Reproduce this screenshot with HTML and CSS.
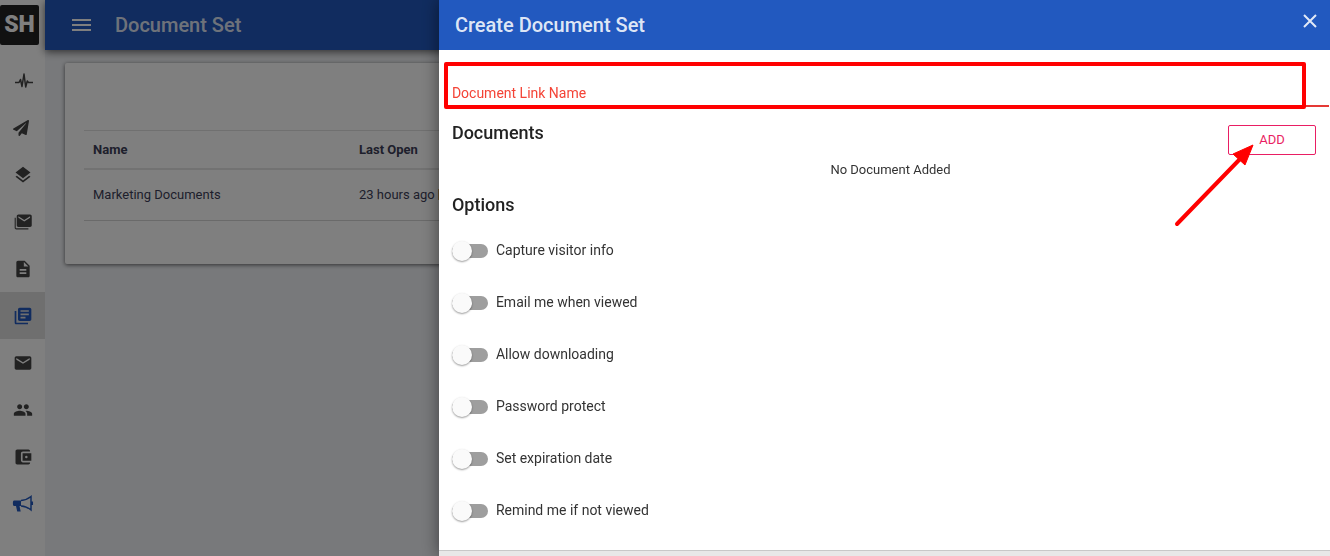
FILE: index.html
```html
<!DOCTYPE html>
<html lang="en">
<head>
  <meta charset="UTF-8" />
  <meta name="viewport" content="width=device-width, initial-scale=1.0" />
  <title>Document Set</title>
  <link rel="stylesheet" href="styles.css">
</head>
<body>
  <div class="app">
    <nav class="sidebar">
      <a href="#" class="logo">SH</a>
      <a href="#" class="nav-item" aria-label="Activity">
        <svg class="line pulse" viewBox="0 0 20 18" width="20" height="18"><path d="M1 10.500h4l1.500-3 1.500 7L10 2l1.700 13 1.600-6 1.200 1.500H19" /></svg>
      </a>
      <a href="#" class="nav-item" aria-label="Campaigns">
        <svg class="send" viewBox="0 0 512 512" width="16" height="16"><path d="M476 3.200L12.500 270.600c-18.100 10.400-15.800 35.600 2.200 43.200L121 358.400l287.300-253.200c5.500-4.900 13.300 2.600 8.600 8.300L176 407v80.500c0 23.600 28.500 32.900 42.500 15.800L282 426l124.600 52.200c14.200 6 30.400-2.900 33-18.200l72-432C515 7.800 493.300-6.800 476 3.200z" /></svg>
      </a>
      <a href="#" class="nav-item" aria-label="Layers">
        <svg viewBox="0 0 24 24" width="20" height="20"><path d="M11.990 18.540l-7.370-5.730L3 14.070l9 7 9-7-1.630-1.270-7.380 5.740zM12 16l7.360-5.730L21 9l-9-7-9 7 1.630 1.270L12 16z" /></svg>
      </a>
      <a href="#" class="nav-item" aria-label="Mailings">
        <svg viewBox="0 0 24 24" width="20" height="20"><path d="M20.500 3H6.500C5.400 3 4.500 3.900 4.500 5v11c0 1.100.9 2 2 2h14c1.100 0 2-.9 2-2V5c0-1.100-.9-2-2-2zm0 4l-7 4.500-7-4.500V5l7 4.500 7-4.500v2zM3.300 7H2v12c0 1.100.9 2 2 2h14.500v-1.500H3.300V7z" /></svg>
      </a>
      <a href="#" class="nav-item" aria-label="Templates">
        <svg viewBox="0 0 24 24" width="20" height="20"><path d="M14 2H6c-1.100 0-1.990.9-1.990 2L4 20c0 1.100.89 2 1.990 2H18c1.100 0 2-.9 2-2V8l-6-6zm2 16H8v-2h8v2zm0-4H8v-2h8v2zm-3-5V3.500L18.500 9H13z" /></svg>
      </a>
      <a href="#" class="nav-item active" aria-label="Document sets">
        <svg viewBox="0 0 24 24" width="20" height="20"><path d="M4 6H2v14c0 1.100.9 2 2 2h14v-2H4V6zm16-4H8c-1.100 0-2 .9-2 2v12c0 1.100.9 2 2 2h12c1.100 0 2-.9 2-2V4c0-1.100-.9-2-2-2zm-1 9H9V9h10v2zm-4 4H9v-2h6v2zm4-8H9V5h10v2z" /></svg>
      </a>
      <a href="#" class="nav-item" aria-label="Email">
        <svg viewBox="0 0 24 24" width="20" height="20"><path d="M20 4H4c-1.100 0-1.990.9-1.990 2L2 18c0 1.100.9 2 2 2h16c1.100 0 2-.9 2-2V6c0-1.100-.9-2-2-2zm0 4l-8 5-8-5V6l8 5 8-5v2z" /></svg>
      </a>
      <a href="#" class="nav-item" aria-label="Contacts">
        <svg viewBox="0 0 24 24" width="20" height="20"><path d="M16 11c1.660 0 2.990-1.340 2.990-3S17.660 5 16 5c-1.660 0-3 1.340-3 3s1.340 3 3 3zm-8 0c1.660 0 2.990-1.340 2.990-3S9.660 5 8 5C6.340 5 5 6.340 5 8s1.340 3 3 3zm0 2c-2.330 0-7 1.170-7 3.500V19h14v-2.500c0-2.330-4.670-3.500-7-3.500zm8 0c-.29 0-.62.020-.97.050 1.160.84 1.970 1.970 1.970 3.450V19h6v-2.500c0-2.330-4.670-3.500-7-3.500z" /></svg>
      </a>
      <a href="#" class="nav-item" aria-label="Wallet">
        <svg viewBox="0 0 24 24" width="20" height="20"><path d="M20.500 18.500v.5c0 1.100-.9 2-2 2H5c-1.110 0-2-.9-2-2V5c0-1.100.89-2 2-2h13.500c1.100 0 2 .9 2 2v.5H12c-1.500 0-2.500 1-2.500 2.500v8c0 1.500 1 2.500 2.500 2.500h8.500zM11.500 16.500H22v-9H11.500v9zm4.500-3a1.500 1.500 0 1 1 0-3 1.500 1.500 0 0 1 0 3z" fill-rule="evenodd" /></svg>
      </a>
      <a href="#" class="nav-item promo" aria-label="Announcements">
        <svg viewBox="0 0 22 18" width="22" height="18"><path d="M2 5.500h7V11H7.500l1.200 5.500H5.200L4 11H2C.5 11 .5 5.500 2 5.500z" /><path class="horn" d="M9 5.500c4-.2 7.500-2 10-4v13.400c-2.500-2-6-3.700-10-3.900M20.300 6.500v3.500" /></svg>
      </a>
    </nav>

    <div class="page">
      <header class="topbar">
        <button class="menu-btn" aria-label="Menu"><span></span><span></span><span></span></button>
        <h1>Document Set</h1>
      </header>
      <main class="card">
        <table>
          <thead>
            <tr><th class="name-col">Name</th><th>Last Open</th></tr>
          </thead>
          <tbody>
            <tr>
              <td>Marketing Documents</td>
              <td><div class="opened">23 hours ago<span class="badge"></span></div></td>
            </tr>
          </tbody>
        </table>
      </main>
    </div>
  </div>

  <div class="overlay">
    <section class="panel">
      <header class="panel-header">
        <h2>Create Document Set</h2>
        <button class="close-btn" aria-label="Close">
          <svg viewBox="0 0 16 16" width="16" height="16"><path d="M2 2l12 12M14 2L2 14" /></svg>
        </button>
      </header>

      <form class="panel-body">
        <div class="field">
          <label for="linkName">Document Link Name</label>
          <input type="text" id="linkName" />
          <div class="highlight"></div>
        </div>

        <div class="section-head">
          <h3>Documents</h3>
          <div class="add-wrap">
            <button type="button" class="add-btn">ADD</button>
            <svg class="arrow" viewBox="0 0 80 84" width="80" height="84">
              <path d="M3 80L66 15" />
              <polygon points="79,1 59,10 71,21" />
            </svg>
          </div>
        </div>
        <p class="empty">No Document Added</p>

        <h3>Options</h3>
        <div class="options">
          <label><input type="checkbox" />Capture visitor info</label>
          <label><input type="checkbox" />Email me when viewed</label>
          <label><input type="checkbox" />Allow downloading</label>
          <label><input type="checkbox" />Password protect</label>
          <label><input type="checkbox" />Set expiration date</label>
          <label><input type="checkbox" />Remind me if not viewed</label>
        </div>
      </form>
      <footer class="panel-footer"></footer>
    </section>
  </div>
</body>
</html>
```

FILE: styles.css
```css
* {
  box-sizing: border-box;
}
body {
  margin: 0;
  font-family: Roboto, Arial, sans-serif;
  font-size: 13px;
  color: #333;
  overflow: hidden;
}
h1, h2, h3, p {
  margin: 0;
}
button {
  font-family: inherit;
  cursor: pointer;
}
.app {
  display: flex;
  height: 100vh;
  background-color: #f1f3f7;
}

/* sidebar */
.sidebar {
  width: 45px;
  flex-shrink: 0;
  padding-top: 5px;
  background-color: #fff;
}
.logo {
  display: block;
  width: 39px;
  height: 40px;
  margin-bottom: 12px;
  border-radius: 2px;
  background-color: #222;
  color: #fff;
  font-size: 23px;
  font-weight: 900;
  line-height: 40px;
  text-align: center;
  text-decoration: none;
}
.nav-item {
  display: flex;
  align-items: center;
  justify-content: center;
  height: 47px;
}
.nav-item svg {
  fill: #444;
}
.nav-item .line {
  fill: none;
  stroke: #444;
  stroke-width: 1.5;
  stroke-linejoin: round;
}
.nav-item .pulse {
  margin-left: 3px;
}
.nav-item .send {
  margin-right: 4px;
}
.nav-item.active {
  background-color: #dedede;
}
.nav-item.active svg,
.nav-item.promo svg {
  fill: #2259bf;
}
.nav-item .horn {
  fill: none;
  stroke: #2259bf;
  stroke-width: 1.5;
}

/* page behind the panel */
.page {
  flex: 1;
}
.topbar {
  display: flex;
  align-items: center;
  gap: 24px;
  height: 50px;
  padding-left: 27px;
  background-color: #2259bf;
  box-shadow: 0 2px 8px rgba(0, 0, 0, 0.6);
}
.menu-btn {
  display: flex;
  flex-direction: column;
  gap: 3px;
  width: 19px;
  padding: 0;
  border: none;
  background: none;
}
.menu-btn span {
  height: 2px;
  background-color: #fff;
}
.topbar h1,
.panel-header h2 {
  font-size: 20px;
  font-weight: 500;
  color: rgba(255, 255, 255, 0.87);
}
.card {
  margin: 13px 20px;
  padding: 67px 19px 43px;
  border-radius: 2px;
  background-color: #fff;
  box-shadow: 0 1px 4px rgba(0, 0, 0, 0.6);
}
table {
  width: 100%;
  border-collapse: separate;
  border-spacing: 0;
  border-top: 1px solid #e0e0e0;
}
th, td {
  padding: 0 9px;
  text-align: left;
  color: #3d3f58;
}
th {
  height: 39px;
  font-weight: 700;
  border-bottom: 2px solid #e4e4e4;
}
td {
  height: 51px;
  padding-bottom: 2px;
  border-bottom: 1px solid #d4d4d4;
}
.name-col {
  width: 266px;
}
.opened {
  display: flex;
  align-items: center;
  gap: 3px;
}
.badge {
  width: 12px;
  height: 11px;
  background-color: #d8a860;
}

/* slide-in panel */
.overlay {
  position: fixed;
  inset: 0;
  display: flex;
  justify-content: flex-end;
  background-color: rgba(0, 0, 0, 0.5);
}
.panel {
  width: 67%;
  display: flex;
  flex-direction: column;
  background-color: #fff;
  box-shadow: 0 0 16px rgba(0, 0, 0, 0.5);
}
.panel-header {
  display: flex;
  justify-content: space-between;
  align-items: center;
  height: 50px;
  flex-shrink: 0;
  padding: 0 12px 0 16px;
  background-color: #2259bf;
}
.close-btn {
  display: flex;
  padding: 0;
  margin-bottom: 8px;
  border: none;
  background: none;
}
.close-btn path {
  stroke: rgba(255, 255, 255, 0.87);
  stroke-width: 2;
}
.panel-body {
  flex-shrink: 0;
  padding: 0 1px 14px 13px;
}
.field {
  position: relative;
  padding-top: 24px;
}
.field label {
  position: absolute;
  left: 0;
  bottom: 4px;
  font-size: 14px;
  line-height: 20px;
  color: #f44336;
}
.field input {
  display: block;
  width: 100%;
  height: 33px;
  padding: 0;
  border: none;
  border-bottom: 2px solid #e53935;
  background: none;
  font: inherit;
  font-size: 14px;
  outline: none;
}
.highlight {
  position: absolute;
  top: 12px;
  right: 23px;
  bottom: -2px;
  left: -8px;
  border: 4px solid #f00;
  border-radius: 2px;
  pointer-events: none;
}
h3 {
  font-size: 18px;
  font-weight: 500;
  line-height: 24px;
  color: #222;
}
.section-head {
  display: flex;
  justify-content: space-between;
  align-items: flex-start;
  padding-top: 14px;
}
.add-wrap {
  position: relative;
  margin: 4px 13px 0 0;
}
.add-btn {
  display: block;
  width: 88px;
  height: 30px;
  padding: 0 0 2px;
  border: 1px solid #e91e63;
  border-radius: 2px;
  background-color: #fff;
  color: #e91e63;
  font-size: 13px;
}
.arrow {
  position: absolute;
  top: 19px;
  left: -54px;
  pointer-events: none;
}
.arrow path {
  stroke: #f00;
  stroke-width: 4;
  stroke-linecap: round;
}
.arrow polygon {
  fill: #f00;
  stroke: #f00;
  stroke-width: 1;
}
.empty {
  margin: 6px 0 14px;
  line-height: 18px;
  text-align: center;
}
.options {
  margin-top: 7px;
}
.options label {
  display: flex;
  align-items: center;
  gap: 8px;
  height: 52px;
  font-size: 14px;
}
.options input {
  appearance: none;
  position: relative;
  width: 36px;
  height: 14px;
  margin: 2px 0 0;
  border-radius: 7px;
  background-color: #9e9e9e;
}
.options input::before {
  content: "";
  position: absolute;
  top: -3px;
  left: 0;
  width: 20px;
  height: 20px;
  border-radius: 50%;
  background-color: #fafafa;
  box-shadow: 0 1px 2px rgba(0, 0, 0, 0.4);
}
.options input:checked::before {
  left: 16px;
}
.panel-footer {
  flex: 1;
  border-top: 1px solid #c8c8c8;
  background-color: #e8e8e8;
}
```
